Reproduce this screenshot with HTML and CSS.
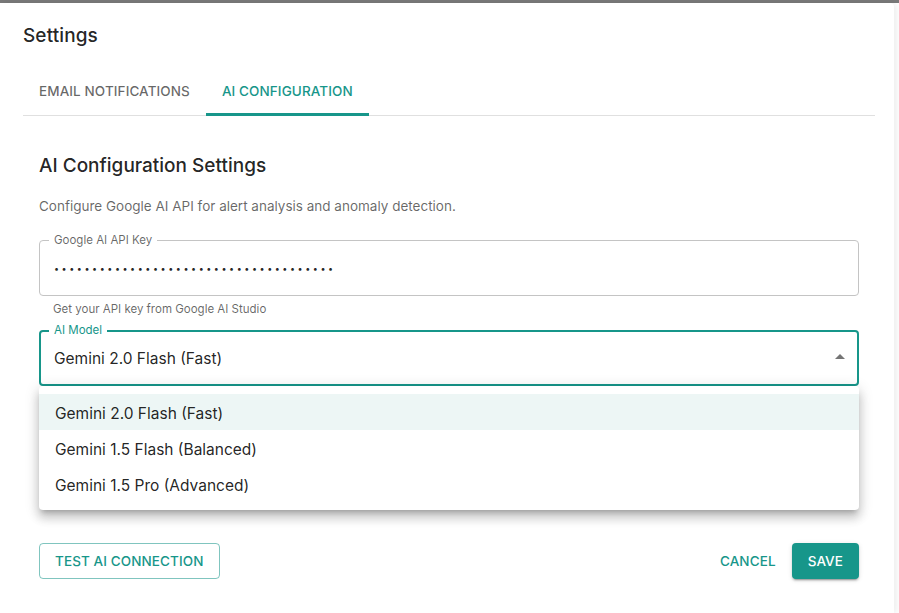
FILE: index.html
```html
<!DOCTYPE html>
<html lang="en">
<head>
<meta charset="utf-8">
<title>Settings</title>
<link rel="stylesheet" href="styles.css">
</head>
<body>
<div class="backdrop-strip"></div>
<div class="dialog">
  <h2 class="dialog-title">Settings</h2>
  <div class="tabs">
    <div class="tab">Email Notifications</div>
    <div class="tab tab-active">AI Configuration<span class="indicator"></span></div>
  </div>
  <div class="content">
    <h3 class="section-title">AI Configuration Settings</h3>
    <p class="description">Configure Google AI API for alert analysis and anomaly detection.</p>

    <div class="field">
      <span class="field-label">Google AI API Key</span>
      <div class="field-value dots">•••••••••••••••••••••••••••••••••••••</div>
    </div>
    <div class="helper">Get your API key from Google AI Studio</div>

    <div class="select-wrap">
      <div class="field field-focused">
        <span class="field-label label-focused">AI Model</span>
        <div class="field-value">Gemini 2.0 Flash (Fast)</div>
        <svg class="arrow" viewBox="0 0 24 24" width="24" height="24"><path d="M7 14l5-5 5 5z"/></svg>
      </div>
      <ul class="menu">
        <li class="menu-item selected">Gemini 2.0 Flash (Fast)</li>
        <li class="menu-item">Gemini 1.5 Flash (Balanced)</li>
        <li class="menu-item">Gemini 1.5 Pro (Advanced)</li>
      </ul>
    </div>
  </div>
  <div class="actions">
    <button class="btn btn-outlined">Test AI Connection</button>
    <div class="actions-right">
      <button class="btn btn-text">Cancel</button>
      <button class="btn btn-contained">Save</button>
    </div>
  </div>
</div>
</body>
</html>
```

FILE: styles.css
```css
* { box-sizing: border-box; }
html, body {
  margin: 0;
  padding: 0;
  background: #ffffff;
  font-family: Inter, "Noto Sans", "Liberation Sans", sans-serif;
  color: rgba(0,0,0,0.87);
  height: 613px;
  overflow: hidden;
}
.backdrop-strip {
  height: 3px;
  background: #797979;
}
.dialog {
  width: 894px;
  height: 610px;
  background: #fff;
  border-radius: 0 4px 0 0;
  box-shadow: 3px 0 6px rgba(0,0,0,0.07);
  padding: 17px 0 0 23px;
}
.dialog-title {
  margin: 0;
  font-size: 19px;
  font-weight: 500;
  line-height: 32px;
  letter-spacing: 0.1px;
}
.tabs {
  margin-top: 15px;
  width: 852px;
  display: flex;
  border-bottom: 1px solid #e0e0e0;
}
.tab {
  position: relative;
  height: 48px;
  padding: 0 16px;
  display: flex;
  align-items: center;
  font-size: 13.5px;
  font-weight: 500;
  text-transform: uppercase;
  letter-spacing: 0.1px;
  color: rgba(0,0,0,0.6);
}
.tab-active { color: #17968a; }
.indicator {
  position: absolute;
  left: 0; right: 0; bottom: -1px;
  height: 3px;
  background: #17968a;
}
.content {
  width: 852px;
  padding: 34px 16px 0 16px;
  height: 427px;
}
.section-title {
  margin: 0;
  font-size: 19px;
  font-weight: 500;
  line-height: 32px;
}
.description {
  margin: 14px 0 0;
  font-size: 13.5px;
  line-height: 20px;
  color: rgba(0,0,0,0.6);
}
.field {
  position: relative;
  margin-top: 24px;
  height: 56px;
  border: 1px solid #c4c4c4;
  border-radius: 4px;
  display: flex;
  align-items: center;
  padding: 0 14px;
}
.field-label {
  position: absolute;
  top: -8px;
  left: 9px;
  padding: 0 5px;
  background: #fff;
  font-size: 11.5px;
  line-height: 14px;
  color: rgba(0,0,0,0.6);
}
.field-value {
  font-size: 15.5px;
  line-height: 23px;
}
.dots {
  font-size: 9px;
  letter-spacing: 2.55px;
  color: rgba(0,0,0,0.87);
}
.helper {
  margin: 3px 0 0 14px;
  font-size: 11.5px;
  line-height: 20px;
  color: rgba(0,0,0,0.6);
}
.select-wrap {
  position: relative;
  margin-top: 11px;
}
.field-focused {
  margin-top: 0;
  border: 2px solid #17968a;
  padding: 0 13px;
}
.label-focused {
  left: 8px;
  top: -9px;
  color: #17968a;
}
.arrow {
  position: absolute;
  right: 5px;
  top: 13px;
  fill: #757575;
}
.menu {
  position: absolute;
  left: 0; right: 0;
  top: 56px;
  margin: 0;
  padding: 8px 0;
  list-style: none;
  background: #fff;
  border-radius: 4px;
  box-shadow: 0 5px 5px -3px rgba(0,0,0,0.2), 0 8px 10px 1px rgba(0,0,0,0.14), 0 3px 14px 2px rgba(0,0,0,0.12);
  z-index: 2;
}
.menu-item {
  height: 36px;
  padding: 2px 16px 0;
  display: flex;
  align-items: center;
  font-size: 15.5px;
}
.menu-item.selected { background: #edf6f5; }
.actions {
  width: 852px;
  padding: 0 16px;
  display: flex;
  justify-content: space-between;
  align-items: center;
}
.actions-right {
  display: flex;
  gap: 8px;
  align-items: center;
}
.btn {
  font-family: inherit;
  font-size: 13.5px;
  font-weight: 500;
  text-transform: uppercase;
  letter-spacing: 0.1px;
  height: 36px;
  border-radius: 4px;
  cursor: pointer;
  background: transparent;
  border: none;
  color: #17968a;
}
.btn-outlined {
  border: 1px solid rgba(23,150,138,0.55);
  padding: 0 15px;
}
.btn-text { padding: 0 8px; }
.btn-contained {
  background: #17968a;
  color: #fff;
  padding: 0 16px;
  box-shadow: 0 3px 1px -2px rgba(0,0,0,0.2), 0 2px 2px 0 rgba(0,0,0,0.14), 0 1px 5px 0 rgba(0,0,0,0.12);
}
```
